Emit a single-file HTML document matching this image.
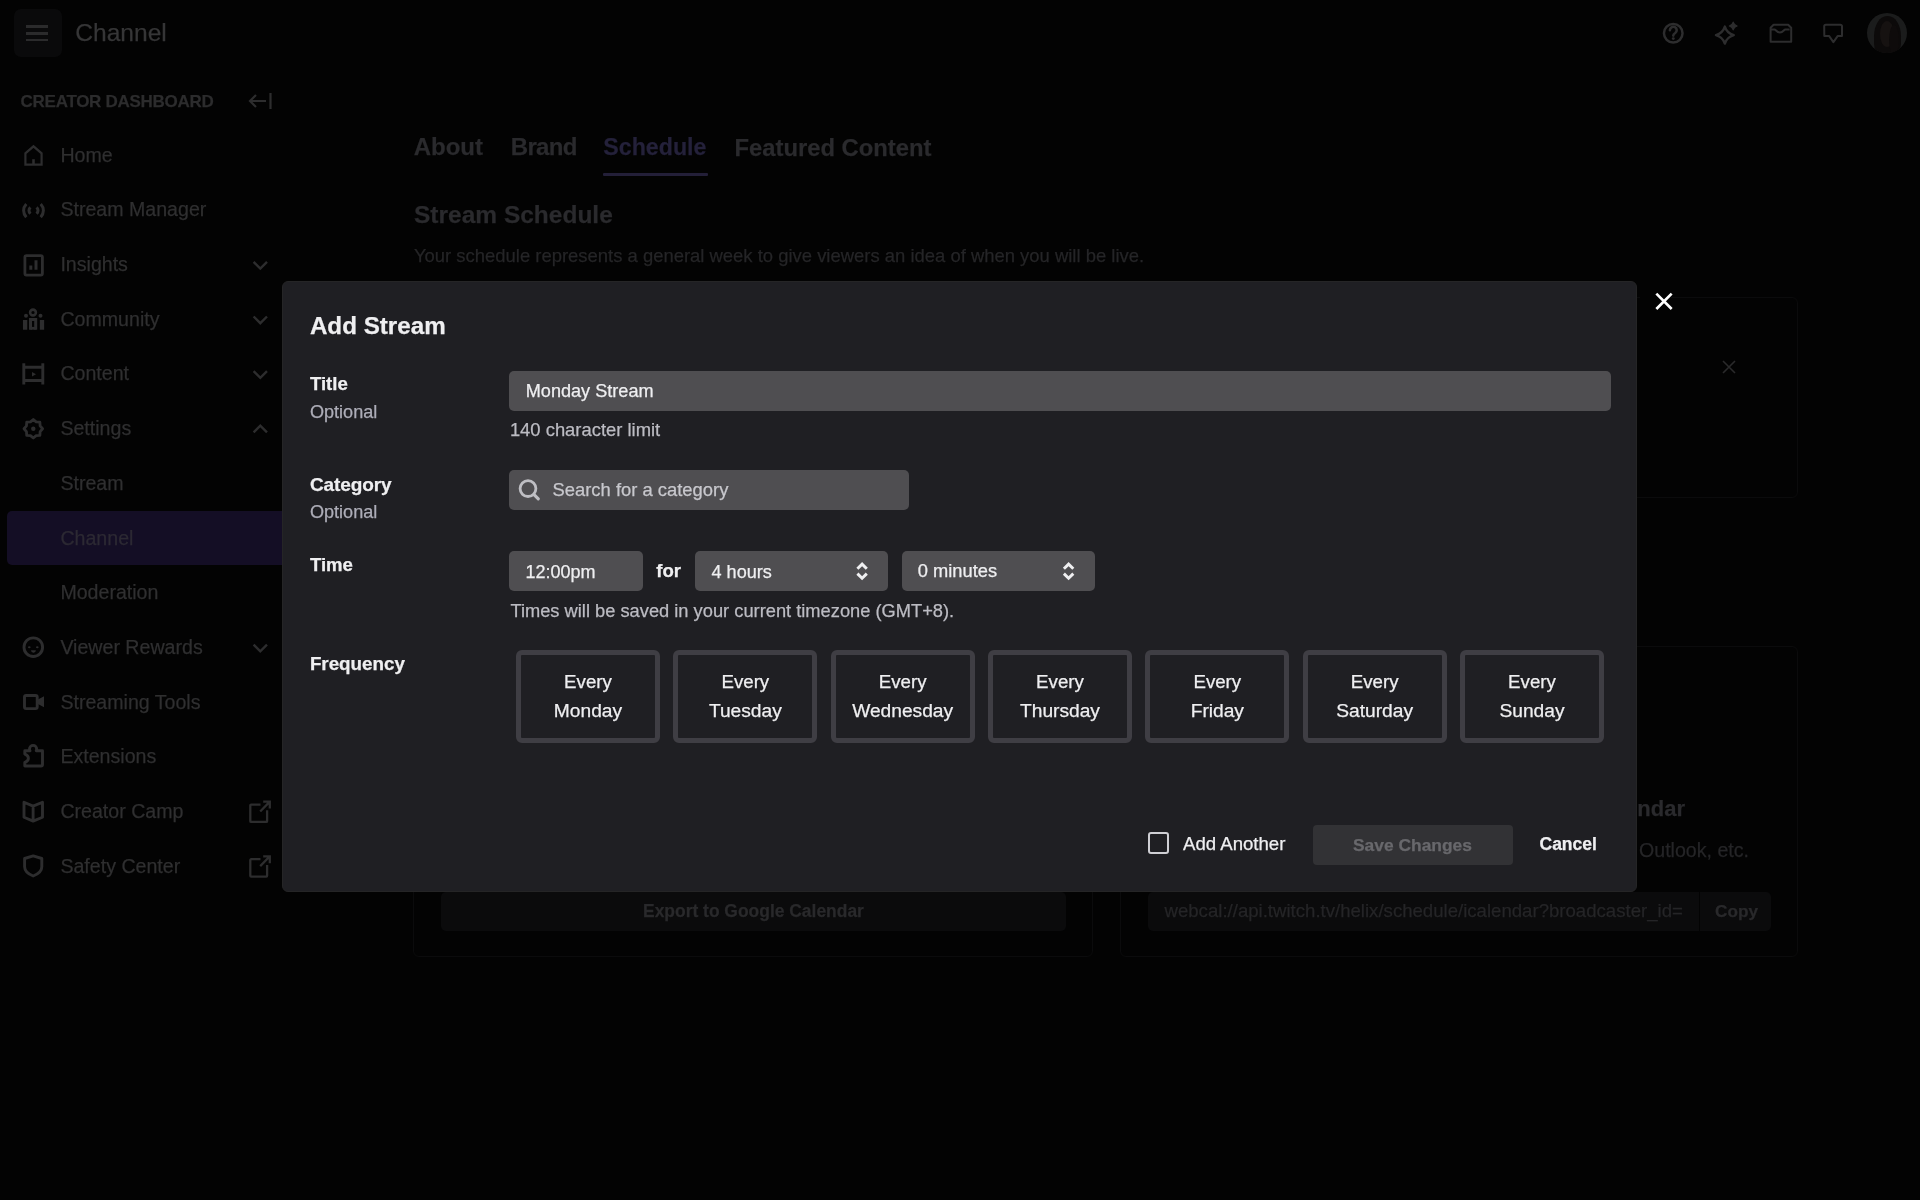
<!DOCTYPE html>
<html><head><meta charset="utf-8">
<style>
*{box-sizing:border-box;margin:0;padding:0}
html,body{width:1920px;height:1200px;overflow:hidden;background:#030303;font-family:"Liberation Sans",sans-serif}
.a{position:absolute;white-space:nowrap;line-height:1}
.a{-webkit-text-stroke:0.25px currentColor}
#w{position:absolute;left:0;top:0;width:1920px;height:1200px;will-change:transform}
svg{position:absolute;overflow:visible}
.r{position:absolute}
</style></head><body><div id="w">
<div class="r" style="left:14px;top:9.4px;width:47.5px;height:48px;background:#0a0a0b;border-radius:7px"></div>
<div class="r" style="left:26px;top:25px;width:22.4px;height:2.6px;background:#2b2b2c"></div>
<div class="r" style="left:26px;top:32.3px;width:22.4px;height:2.6px;background:#2b2b2c"></div>
<div class="r" style="left:26px;top:38.6px;width:22.4px;height:2.6px;background:#2b2b2c"></div>
<div class="a" style="left:75.20px;top:21.18px;font-size:24.6px;color:#363637;font-weight:400;">Channel</div>
<svg style="left:0;top:0" width="1920" height="70" fill="none" stroke="#2d2d2e" stroke-width="2">
<circle cx="1673.25" cy="33.25" r="9.3" stroke-width="2.5"/>
<path d="M1669.9 30.2a3.4 3.4 0 1 1 5.3 2.8c-1.1.7-1.9 1.4-1.9 2.6" stroke-width="2.6" stroke-linecap="round"/>
<circle cx="1673.3" cy="38.6" r="1.45" fill="#2d2d2e" stroke="none"/>
<path d="M1724.85 26.6Q1726.85 33.1 1733.75 35.1Q1726.85 37.1 1724.85 43.6Q1722.85 37.1 1715.9499999999998 35.1Q1722.85 33.1 1724.85 26.6Z" stroke-width="2.4" stroke-linejoin="round"/>
<path d="M1733.2 22.1Q1734.1000000000001 25.1 1737.1000000000001 26.0Q1734.1000000000001 26.9 1733.2 29.9Q1732.3 26.9 1729.3 26.0Q1732.3 25.1 1733.2 22.1Z" fill="#2d2d2e" stroke-width="1.2" stroke-linejoin="round"/>
<path d="M1770.6 41.8V27.8l3-3h14.6l3 3v14z" stroke-linejoin="round"/>
<path d="M1770.6 29.4h3.8c1.6 0 2 3 5.5 3s3.9-3 5.5-3h4.2"/>
<path d="M1824.2 26.3a1.6 1.6 0 0 1 1.6-1.6h14.6a1.6 1.6 0 0 1 1.6 1.6v9.8h-4.4l-4.2 6-4.2-6h-4.9z" stroke-linejoin="round"/>
</svg>
<div class="r" style="left:1866.5px;top:13.3px;width:40px;height:40px;border-radius:50%;background:#1b1c1c;overflow:hidden"><div class="r" style="left:7.5px;top:2.5px;width:27px;height:42px;border-radius:48% 48% 35% 35%;background:#0c0a0a"></div><div class="r" style="left:13px;top:8px;width:14px;height:26px;border-radius:50%;background:#161211"></div><div class="r" style="left:22px;top:12px;width:10px;height:30px;border-radius:50%;background:#0e0b0b"></div></div>
<div class="a" style="left:20.60px;top:92.91px;font-size:17px;color:#2c2c2d;font-weight:700;letter-spacing:-0.28px">CREATOR DASHBOARD</div>
<svg style="left:0;top:0" width="300" height="900" fill="none" stroke="#2d2d2e" stroke-width="2.2">
<path d="M250 101h16M256 95l-6 6 6 6M270.5 93v16"/>
<path d="M25.4 164.6V153.3L33.5 146.3L41.6 153.3V164.6z" stroke-linejoin="miter"/><path d="M33.5 164.6v-5.4" stroke-width="2.6"/>
<path d="M26.3 203.97c-3.6 3.9-3.6 9.3 0 13.2M40.7 203.97c3.6 3.9 3.6 9.3 0 13.2" stroke-width="3"/><path d="M30.4 207.37c-1.9 1.9-1.9 4.5 0 6.4M36.6 207.37c1.9 1.9 1.9 4.5 0 6.4" stroke-width="3"/>
<rect x="24.9" y="255.54000000000002" width="17.5" height="19.5" rx="1.5" stroke-width="2.8"/><path d="M30.8 269.84000000000003v-4.3M36 269.84000000000003v-9.7" stroke-width="3"/>
<circle cx="33" cy="312.51" r="2.9" stroke-width="2.6"/><path d="M30.5 329.71V319.51h5.2v10.2" stroke-width="3" stroke-linejoin="miter"/><path d="M30.5 328.30999999999995h5.2" stroke-width="2.8"/><path d="M25.1 329.71V320.01M42 329.71V320.01" stroke-width="4.3"/><circle cx="26" cy="315.80999999999995" r="2" fill="#2d2d2e" stroke="none"/><circle cx="40.5" cy="315.80999999999995" r="2" fill="#2d2d2e" stroke="none"/>
<path d="M23.8 363.28000000000003v21.3M42.8 363.28000000000003v21.3M24 367.28000000000003h18.8M24 380.48h18.8" stroke-width="2.9"/><path d="M32 371.98v4.6l4-2.3z" fill="#2d2d2e" stroke="none"/>
<path d="M33.30 419.45L36.13 421.91L39.88 422.17L40.14 425.92L42.60 428.75L40.14 431.58L39.88 435.33L36.13 435.59L33.30 438.05L30.47 435.59L26.72 435.33L26.46 431.58L24.00 428.75L26.46 425.92L26.72 422.17L30.47 421.91z" stroke-width="2.8" stroke-linejoin="round"/><circle cx="33.3" cy="428.75" r="2.2" fill="#2d2d2e" stroke="none"/>
<circle cx="33.3" cy="647.1300000000001" r="9.3" stroke-width="2.9"/><ellipse cx="29.3" cy="647.33" rx="1.3" ry="1" fill="#2d2d2e" stroke="none"/><ellipse cx="37.3" cy="647.33" rx="1.3" ry="1" fill="#2d2d2e" stroke="none"/><path d="M31 650.33h4.9a2.45 2.45 0 0 1-4.9 0z" fill="#2d2d2e" stroke="none"/>
<rect x="24.5" y="695.5" width="12.7" height="13.1" rx="1.6" stroke-width="2.9"/><path d="M37 700.0l7-3.8v11.1l-7-3.8z" fill="#2d2d2e" stroke="none"/>
<path d="M24.8 765.97h16.3a1.4 1.4 0 0 0 1.4-1.4V750.77h-6.3c.3-.5.5-1.1.5-1.8a3.6 3.6 0 0 0-7.2 0c0 .7.2 1.3.5 1.8h-5.2v3.3c1 .4 3.6 1.3 3.6 4.2s-2.6 3.8-3.6 4.2z" stroke-width="2.9" stroke-linejoin="round"/>
<path d="M24 802.2399999999999l9.1 3.9 9.4-3.9v15l-9.4 3.9-9.1-3.9zM33.1 806.14v13.8" stroke-width="2.9" stroke-linejoin="round"/>
<path d="M24.6 858.51l8.6-2.6 8.6 2.6v8.2c0 3.9-3.9 7.4-8.6 9.3-4.7-1.9-8.6-5.4-8.6-9.3z" stroke-width="2.9" stroke-linejoin="round"/><path d="M253.6 261.84000000000003l6.7 6.7 6.7-6.7" stroke-width="2.4"/><path d="M253.6 316.51l6.7 6.7 6.7-6.7" stroke-width="2.4"/><path d="M253.6 371.18000000000006l6.7 6.7 6.7-6.7" stroke-width="2.4"/><path d="M253.6 644.5300000000001l6.7 6.7 6.7-6.7" stroke-width="2.4"/><path d="M253.6 432.45l6.7-6.7 6.7 6.7" stroke-width="2.4"/><path d="M260.5 804.54h-9.4a.8.8 0 0 0-.8.8v15.8a.8.8 0 0 0 .8.8h15.2a.8.8 0 0 0 .8-.8V810.3399999999999M260.2 811.4399999999999l9.6-9.8M263.2 801.64h6.6v6.9" stroke-width="2.3"/><path d="M260.5 859.21h-9.4a.8.8 0 0 0-.8.8v15.8a.8.8 0 0 0 .8.8h15.2a.8.8 0 0 0 .8-.8V865.01M260.2 866.11l9.6-9.8M263.2 856.3100000000001h6.6v6.9" stroke-width="2.3"/></svg>
<div class="r" style="left:7px;top:510.5px;width:300px;height:54px;background:#140e25;border-radius:5px"></div>
<div class="a" style="left:60.40px;top:145.81px;font-size:19.6px;color:#2f2f30;font-weight:400;">Home</div>
<div class="a" style="left:60.40px;top:200.48px;font-size:19.6px;color:#2f2f30;font-weight:400;">Stream Manager</div>
<div class="a" style="left:60.40px;top:255.15px;font-size:19.6px;color:#2f2f30;font-weight:400;">Insights</div>
<div class="a" style="left:60.40px;top:309.82px;font-size:19.6px;color:#2f2f30;font-weight:400;">Community</div>
<div class="a" style="left:60.40px;top:364.49px;font-size:19.6px;color:#2f2f30;font-weight:400;">Content</div>
<div class="a" style="left:60.40px;top:419.16px;font-size:19.6px;color:#2f2f30;font-weight:400;">Settings</div>
<div class="a" style="left:60.40px;top:473.83px;font-size:19.6px;color:#2f2f30;font-weight:400;">Stream</div>
<div class="a" style="left:60.40px;top:528.50px;font-size:19.6px;color:#2c2933;font-weight:400;">Channel</div>
<div class="a" style="left:60.40px;top:583.17px;font-size:19.6px;color:#2f2f30;font-weight:400;">Moderation</div>
<div class="a" style="left:60.40px;top:637.84px;font-size:19.6px;color:#2f2f30;font-weight:400;">Viewer Rewards</div>
<div class="a" style="left:60.40px;top:692.51px;font-size:19.6px;color:#2f2f30;font-weight:400;">Streaming Tools</div>
<div class="a" style="left:60.40px;top:747.18px;font-size:19.6px;color:#2f2f30;font-weight:400;">Extensions</div>
<div class="a" style="left:60.40px;top:801.85px;font-size:19.6px;color:#2f2f30;font-weight:400;">Creator Camp</div>
<div class="a" style="left:60.40px;top:856.52px;font-size:19.6px;color:#2f2f30;font-weight:400;">Safety Center</div>
<div class="a" style="left:413.70px;top:135.38px;font-size:24px;color:#2a2a2d;font-weight:700;">About</div>
<div class="a" style="left:510.80px;top:135.38px;font-size:24px;color:#2a2a2d;font-weight:700;letter-spacing:-0.7px">Brand</div>
<div class="a" style="left:603.30px;top:136.06px;font-size:23.2px;color:#24213a;font-weight:700;">Schedule</div>
<div class="r" style="left:602.5px;top:173px;width:105px;height:3px;background:#231f38;border-radius:1px"></div>
<div class="a" style="left:734.50px;top:135.55px;font-size:23.8px;color:#2a2a2d;font-weight:700;">Featured Content</div>
<div class="a" style="left:414.00px;top:203.26px;font-size:24.5px;color:#2a2a2d;font-weight:700;">Stream Schedule</div>
<div class="a" style="left:414.00px;top:246.88px;font-size:18.45px;color:#252527;font-weight:400;">Your schedule represents a general week to give viewers an idea of when you will be live.</div>
<div class="r" style="left:1120px;top:297px;width:678px;height:201px;border:1.5px solid #0b0b0c;border-radius:6px"></div>
<svg style="left:0;top:0" width="1920" height="1200" fill="none" stroke="#2a2a2b" stroke-width="1.6"><path d="M1723 361l12 12M1735 361l-12 12"/></svg>
<div class="r" style="left:1120px;top:646px;width:678px;height:311px;border:1.5px solid #0b0b0c;border-radius:6px"></div>
<div class="r" style="left:413px;top:646px;width:680px;height:311px;border:1.5px solid #0b0b0c;border-radius:6px"></div>
<div class="a" style="left:1500.00px;top:798.38px;font-size:22px;color:#2a2a2d;font-weight:700;letter-spacing:0px;left:auto;right:235px">Add to Other Calendar</div>
<div class="a" style="left:1400.00px;top:841.41px;font-size:19.6px;color:#252527;font-weight:400;left:auto;right:171px">Outlook, etc.</div>
<div class="r" style="left:441px;top:892px;width:625px;height:39px;background:#0b0b0c;border-radius:5px"></div>
<div class="a" style="left:643.00px;top:903.23px;font-size:17.45px;color:#29292b;font-weight:700;">Export to Google Calendar</div>
<div class="r" style="left:1148px;top:892px;width:551px;height:39px;background:#0b0b0c;border-radius:5px 0 0 5px"></div>
<div class="r" style="left:1700px;top:892px;width:71px;height:39px;background:#0b0b0c;border-radius:0 5px 5px 0"></div>
<div class="a" style="left:1164.50px;top:902.26px;font-size:18.6px;color:#252527;font-weight:400;">webcal://api.twitch.tv/helix/schedule/icalendar?broadcaster_id=</div>
<div class="a" style="left:1715.00px;top:903.44px;font-size:17.2px;color:#29292b;font-weight:700;">Copy</div>
<div class="r" style="left:282.4px;top:280.8px;width:1355px;height:611px;background:#1f1f23;border:1px solid #252526;border-radius:6px"></div>
<div class="r" style="left:1640px;top:277px;width:31px;height:43px;background:#030303"></div>
<svg style="left:0;top:0" width="1920" height="1200" fill="none" stroke="#fff" stroke-width="2.7" stroke-linecap="square"><path d="M1657.3 294.6l13.4 13.4M1670.7 294.6l-13.4 13.4"/></svg>
<div class="a" style="left:309.90px;top:314.31px;font-size:24.2px;color:#efeff1;font-weight:700;">Add Stream</div>
<div class="a" style="left:309.90px;top:375.26px;font-size:18.6px;color:#efeff1;font-weight:700;">Title</div>
<div class="a" style="left:309.90px;top:403.28px;font-size:18.1px;color:#adadb8;font-weight:400;">Optional</div>
<div class="r" style="left:509px;top:371px;width:1102px;height:40px;background:#4f4e51;border-radius:5px"></div>
<div class="a" style="left:525.80px;top:382.18px;font-size:18.1px;color:#efeff1;font-weight:400;">Monday Stream</div>
<div class="a" style="left:509.90px;top:421.32px;font-size:18.4px;color:#bcbcc3;font-weight:400;">140 character limit</div>
<div class="a" style="left:309.90px;top:475.22px;font-size:19px;color:#efeff1;font-weight:700;letter-spacing:-0.1px">Category</div>
<div class="a" style="left:309.90px;top:502.78px;font-size:18.1px;color:#adadb8;font-weight:400;">Optional</div>
<div class="r" style="left:509px;top:470px;width:400px;height:40px;background:#4f4e51;border-radius:5px"></div>
<svg style="left:0;top:0" width="1920" height="1200" fill="none" stroke="#bebec3" stroke-width="2.2"><circle cx="528" cy="488.6" r="7.9" stroke-width="2.8"/><path d="M534 494.6l4.3 4.3" stroke-width="3.1" stroke-linecap="round"/></svg>
<div class="a" style="left:552.50px;top:481.17px;font-size:18.4px;color:#c8c8cd;font-weight:400;">Search for a category</div>
<div class="a" style="left:309.90px;top:555.56px;font-size:18.6px;color:#efeff1;font-weight:700;">Time</div>
<div class="r" style="left:509px;top:551px;width:134px;height:40px;background:#4f4e51;border-radius:5px"></div>
<div class="a" style="left:525.40px;top:562.66px;font-size:18.0px;color:#efeff1;font-weight:400;">12:00pm</div>
<div class="a" style="left:656.25px;top:562.16px;font-size:18.6px;color:#efeff1;font-weight:700;">for</div>
<div class="r" style="left:695px;top:551px;width:193px;height:40px;background:#4f4e51;border-radius:5px"></div>
<div class="a" style="left:711.50px;top:562.58px;font-size:18.1px;color:#efeff1;font-weight:400;">4 hours</div>
<div class="r" style="left:901.5px;top:551px;width:193px;height:40px;background:#4f4e51;border-radius:5px"></div>
<div class="a" style="left:917.80px;top:562.41px;font-size:18.3px;color:#efeff1;font-weight:400;">0 minutes</div>
<svg style="left:0;top:0" width="1920" height="1200" fill="none" stroke="#efeff1" stroke-width="2.9" stroke-linecap="butt" stroke-linejoin="miter"><path d="M857.4 568.8l4.7-4.7 4.7 4.7M857.4 573.6l4.7 4.7 4.7-4.7M1063.9 568.8l4.7-4.7 4.7 4.7M1063.9 573.6l4.7 4.7 4.7-4.7"/></svg>
<div class="a" style="left:510.40px;top:601.51px;font-size:18.3px;color:#bcbcc3;font-weight:400;">Times will be saved in your current timezone (GMT+8).</div>
<div class="a" style="left:309.90px;top:654.79px;font-size:18.8px;color:#efeff1;font-weight:700;">Frequency</div>
<div class="r" style="left:516.00px;top:650px;width:144px;height:93px;border:5px solid #3f3e44;border-radius:6px"></div>
<div class="a" style="left:516.00px;width:144px;text-align:center;top:673.17px;font-size:18.7px;color:#efeff1">Every</div>
<div class="a" style="left:516.00px;width:144px;text-align:center;top:701.35px;font-size:19.2px;color:#efeff1">Monday</div>
<div class="r" style="left:673.33px;top:650px;width:144px;height:93px;border:5px solid #3f3e44;border-radius:6px"></div>
<div class="a" style="left:673.33px;width:144px;text-align:center;top:673.17px;font-size:18.7px;color:#efeff1">Every</div>
<div class="a" style="left:673.33px;width:144px;text-align:center;top:701.35px;font-size:19.2px;color:#efeff1">Tuesday</div>
<div class="r" style="left:830.66px;top:650px;width:144px;height:93px;border:5px solid #3f3e44;border-radius:6px"></div>
<div class="a" style="left:830.66px;width:144px;text-align:center;top:673.17px;font-size:18.7px;color:#efeff1">Every</div>
<div class="a" style="left:830.66px;width:144px;text-align:center;top:701.35px;font-size:19.2px;color:#efeff1">Wednesday</div>
<div class="r" style="left:987.99px;top:650px;width:144px;height:93px;border:5px solid #3f3e44;border-radius:6px"></div>
<div class="a" style="left:987.99px;width:144px;text-align:center;top:673.17px;font-size:18.7px;color:#efeff1">Every</div>
<div class="a" style="left:987.99px;width:144px;text-align:center;top:701.35px;font-size:19.2px;color:#efeff1">Thursday</div>
<div class="r" style="left:1145.32px;top:650px;width:144px;height:93px;border:5px solid #3f3e44;border-radius:6px"></div>
<div class="a" style="left:1145.32px;width:144px;text-align:center;top:673.17px;font-size:18.7px;color:#efeff1">Every</div>
<div class="a" style="left:1145.32px;width:144px;text-align:center;top:701.35px;font-size:19.2px;color:#efeff1">Friday</div>
<div class="r" style="left:1302.65px;top:650px;width:144px;height:93px;border:5px solid #3f3e44;border-radius:6px"></div>
<div class="a" style="left:1302.65px;width:144px;text-align:center;top:673.17px;font-size:18.7px;color:#efeff1">Every</div>
<div class="a" style="left:1302.65px;width:144px;text-align:center;top:701.35px;font-size:19.2px;color:#efeff1">Saturday</div>
<div class="r" style="left:1459.98px;top:650px;width:144px;height:93px;border:5px solid #3f3e44;border-radius:6px"></div>
<div class="a" style="left:1459.98px;width:144px;text-align:center;top:673.17px;font-size:18.7px;color:#efeff1">Every</div>
<div class="a" style="left:1459.98px;width:144px;text-align:center;top:701.35px;font-size:19.2px;color:#efeff1">Sunday</div>
<div class="r" style="left:1148.2px;top:832.3px;width:21.2px;height:21.8px;border:2.7px solid #cfcfd4;border-radius:3px"></div>
<div class="a" style="left:1183.00px;top:835.01px;font-size:18.6px;color:#efeff1;font-weight:400;">Add Another</div>
<div class="r" style="left:1312.5px;top:825px;width:200px;height:40px;background:#323235;border-radius:4px"></div>
<div class="a" style="left:1353.00px;top:837.27px;font-size:17.4px;color:#68686c;font-weight:700;">Save Changes</div>
<div class="a" style="left:1539.50px;top:835.94px;font-size:17.5px;color:#efeff1;font-weight:700;">Cancel</div>
</div></body></html>
